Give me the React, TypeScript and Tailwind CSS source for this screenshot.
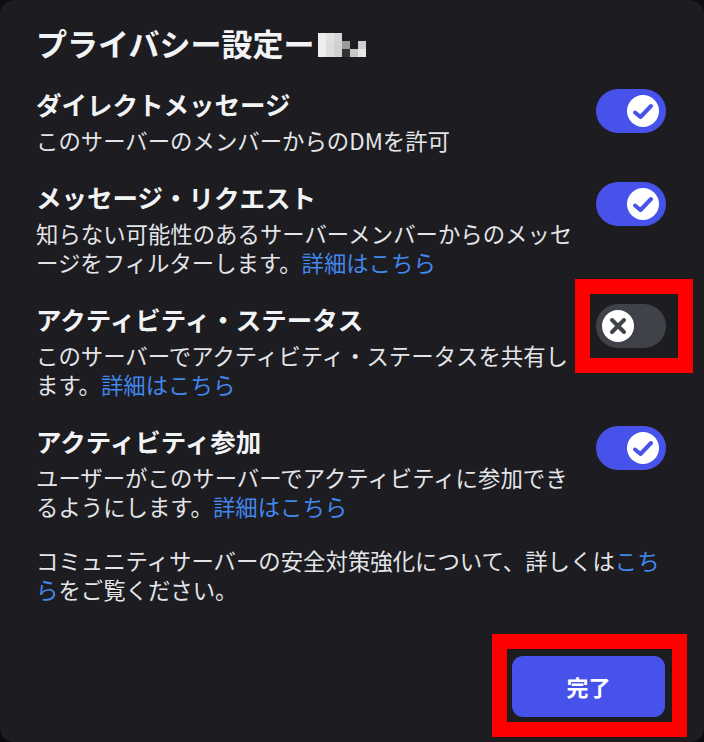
import { ReactNode } from "react"

const font = { fontFamily: '"Noto Sans CJK JP", "Noto Sans", sans-serif' }

function Toggle({ on }: { on: boolean }) {
  return (
    <div
      className={`mt-px flex h-[44px] w-[70px] shrink-0 items-center rounded-full px-[6px] ${
        on ? "justify-end bg-[#4752ea] pr-[7px]" : "justify-start bg-[#40424a]"
      }`}
    >
      <div className="flex h-[32px] w-[32px] items-center justify-center rounded-full bg-white">
        {on ? (
          <svg width="32" height="32" viewBox="0 0 32 32" fill="none">
            <path
              d="M8 17.5L13.5 22L24 11"
              stroke="#4752ea"
              strokeWidth="4"
              strokeLinecap="round"
              strokeLinejoin="round"
            />
          </svg>
        ) : (
          <svg width="32" height="32" viewBox="0 0 32 32" fill="none">
            <path d="M10 10L22 22M22 10L10 22" stroke="#40424a" strokeWidth="4" strokeLinecap="round" />
          </svg>
        )}
      </div>
    </div>
  )
}

function Link({ children }: { children: ReactNode }) {
  return <span className="text-[#4287eb]">{children}</span>
}

function Row({
  title,
  desc,
  on,
  marked = false,
}: {
  title: string
  desc: ReactNode
  on: boolean
  marked?: boolean
}) {
  return (
    <div className="flex items-start gap-4 pr-[2px]">
      <div className="min-w-0 flex-1">
        <div className="text-[25.5px] leading-[32px] font-bold text-[#f2f3f5]">{title}</div>
        <div className="mt-[6px] text-[22.4px] leading-[29px] text-[#e3e5e8]">{desc}</div>
      </div>
      <div className="relative">
        <Toggle on={on} />
        {marked && (
          <div className="pointer-events-none absolute -top-[24px] -bottom-[25px] -left-[21px] -right-[27px] border-[15px] border-[#ff0000]" />
        )}
      </div>
    </div>
  )
}

// pixelated (censored) name next to the title
const cells = [
  ["#ececec", "#e2e2e2", "#d6d6d6", "", "", ""],
  ["#eeeeee", "#dddddd", "#d0d0d0", "#9a9a9a", "", "#cfcfcf"],
  ["#eeeeee", "#dddddd", "#d0d0d0", "#333333", "#c8c8c8", "#e6e6e6"],
]

function Pixelated() {
  return (
    <div className="ml-[4px] grid grid-cols-[repeat(6,8px)] grid-rows-[repeat(3,8px)] self-end mb-[4px]">
      {cells.flat().map((c, i) => (
        <div key={i} style={c ? { backgroundColor: c } : undefined} />
      ))}
    </div>
  )
}

export default function App() {
  return (
    <div className="h-[742px] w-[704px] bg-[#0c0c0e]" style={font}>
      <div className="flex h-full flex-col rounded-[14px] bg-[#1c1c21] px-[36px] pt-[25px] pb-[25px]">
        <div className="flex items-center">
          <h1 className="text-[31px] leading-[36px] font-bold text-[#f2f3f5]">プライバシー設定ー</h1>
          <Pixelated />
        </div>

        <div className="mt-[27px] flex flex-col gap-[26px]">
          <Row title="ダイレクトメッセージ" desc="このサーバーのメンバーからのDMを許可" on />
          <Row
            title="メッセージ・リクエスト"
            desc={
              <>
                知らない可能性のあるサーバーメンバーからのメッセージをフィルターします。<Link>詳細はこちら</Link>
              </>
            }
            on
          />
          <Row
            title="アクティビティ・ステータス"
            desc={
              <>
                このサーバーでアクティビティ・ステータスを共有します。<Link>詳細はこちら</Link>
              </>
            }
            on={false}
            marked
          />
          <Row
            title="アクティビティ参加"
            desc={
              <>
                ユーザーがこのサーバーでアクティビティに参加できるようにします。<Link>詳細はこちら</Link>
              </>
            }
            on
          />
        </div>

        <p className="mt-[25px] text-[22.4px] leading-[29px] text-[#e3e5e8]">
          コミュニティサーバーの安全対策強化について、詳しくは<Link>こちら</Link>をご覧ください。
        </p>

        <div className="mt-auto flex justify-end pr-[3px]">
          <div className="relative">
            <button className="flex h-[61px] w-[153px] items-center justify-center rounded-[11px] bg-[#4752ea] text-[22px] font-bold text-white">
              完了
            </button>
            <div className="pointer-events-none absolute -top-[22px] -bottom-[20px] -left-[20px] -right-[22px] border-[15px] border-[#ff0000]" />
          </div>
        </div>
      </div>
    </div>
  )
}
